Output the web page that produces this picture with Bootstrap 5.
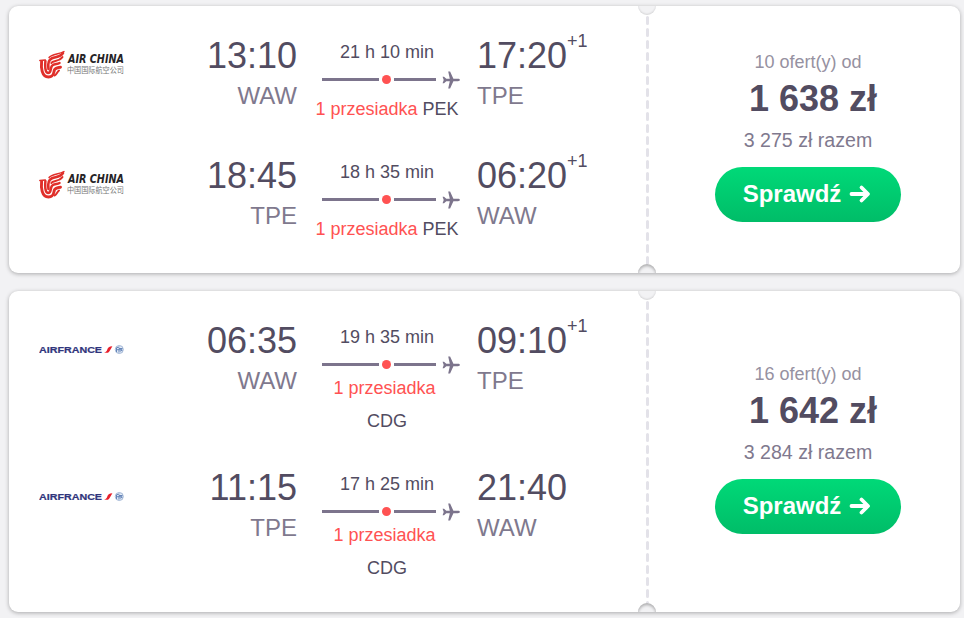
<!DOCTYPE html>
<html lang="pl">
<head>
  <meta charset="UTF-8">
  <meta name="viewport" content="width=device-width, initial-scale=1">
  <title>Wyniki lotów</title>
  <link href="https://cdn.jsdelivr.net/npm/bootstrap@5.3.3/dist/css/bootstrap.min.css" rel="stylesheet">
  <style>
    body {
      background-color: #f2f2f4;
      font-family: "Liberation Sans", Arial, sans-serif;
      color: #524c61;
      overflow: hidden;
    }

    .results {
      padding: 6px 4px 6px 9px;
      display: grid;
      gap: 18px;
    }

    .ticket {
      background-color: #fff;
      border-radius: 9px;
      box-shadow: 0 1px 4px rgba(0, 0, 0, .3);
    }

    .legs {
      width: 629px;
      padding: 14px 0 13px 30px;
    }

    .leg {
      height: 120px;
    }

    .leg-tall {
      height: 147px;
    }

    .airline {
      width: 86px;
      padding-top: 30px;
    }

    .airline svg,
    .plane,
    .arrow {
      display: block;
    }

    .logo-latin {
      font: italic bold 11.5px "DejaVu Sans", sans-serif;
      fill: #262326;
    }

    .logo-han {
      font: 8.5px "Noto Sans CJK SC", sans-serif;
      fill: #777;
    }

    .logo-af {
      font: bold 8.8px "Liberation Sans", sans-serif;
      fill: #30357c;
      stroke: #30357c;
      stroke-width: .2px;
    }

    .point {
      padding-top: 16px;
      width: 172px;
    }

    .point-to {
      width: 150px;
      padding-left: 17px;
    }

    .hour {
      font-size: 36px;
      line-height: 40px;
    }

    .plus-day {
      font-size: 18px;
      line-height: 18px;
      margin-top: -4px;
    }

    .code {
      font-size: 24px;
      line-height: 40px;
      color: #7f798e;
    }

    .path-col {
      width: 146px;
      margin-left: 17px;
      padding-top: 21px;
      font-size: 18px;
      line-height: 22px;
    }

    .track {
      margin: 7px 0 0 8px;
      height: 18px;
    }

    .bar {
      height: 3px;
      background-color: #7c748c;
    }

    .bar-a {
      width: 57px;
    }

    .bar-b {
      width: 42px;
      margin-right: 6px;
    }

    .dot {
      width: 9px;
      height: 9px;
      margin: 0 3px;
      border-radius: 50%;
      background-color: #ff5252;
    }

    .plane {
      margin-top: 1px;
    }

    .stops {
      margin-top: 10px;
    }

    .leg-tall .stops {
      margin-top: -1px;
      line-height: 33px;
    }

    .stop-count {
      color: #ff5252;
    }

    .leg-tall .stop-count {
      margin-right: 5px;
    }

    /* perforation between the flight and the price */
    .tear {
      width: 18px;
      overflow: hidden;
    }

    .notch {
      width: 18px;
      height: 18px;
      flex: none;
      border-radius: 50%;
      background-color: #f2f2f4;
    }

    .notch-top {
      margin-top: -9px;
      box-shadow: inset 0 -1px 2px rgba(0, 0, 0, .12);
    }

    .notch-bottom {
      margin-bottom: -9px;
      box-shadow: inset 0 2px 3px rgba(0, 0, 0, .28);
    }

    .offer {
      padding-bottom: 6px;
    }

    .offer-count {
      font-size: 18px;
      line-height: 22px;
      color: #9691a1;
    }

    .price {
      font-size: 36px;
      line-height: 44px;
      margin-top: 4px;
      padding-left: 10px;
    }

    .total {
      font-size: 19.6px;
      line-height: 28px;
      margin-top: 5px;
      color: #7f798e;
    }

    .btn-check-offer {
      --bs-btn-color: #fff;
      --bs-btn-hover-color: #fff;
      width: 186px;
      height: 55px;
      margin-top: 13px;
      padding: 0 2px 2px 0;
      font-size: 24px;
      border: 0;
      background-image: linear-gradient(#00d978, #00bd68);
    }
  </style>
</head>
<body>

<!-- Shared drawings -->
<svg width="0" height="0" class="position-absolute">
  <symbol id="plane" viewBox="0 0 18 18">
    <path fill="#7c748c" d="M17.900 9c0 .7-.8 1.200-1.900 1.200h-4.600L8.100 17.500H6.200L7.800 10.200H4.300L2 12.300H.6L1.700 9 .6 5.700H2L4.300 7.800H7.800L6.200 .5H8.100L11.400 7.800H16c1.100 0 1.900.5 1.900 1.200z"/>
  </symbol>
  <symbol id="arrow" viewBox="0 0 22 20">
    <path d="M2.500 10H18.500M12.500 3.500L19 10L12.500 16.500" fill="none" stroke="#fff" stroke-width="3.800" stroke-linecap="round" stroke-linejoin="round"/>
  </symbol>
  <symbol id="phoenix" viewBox="0 0 27 30">
    <g fill="none" stroke="#e02f2a" stroke-linecap="round">
      <path stroke-width="2.900" d="M2.600 11.500C2 17 2.500 27 9.500 27c5.500 0 5-4.500 6-7.200.8-2 3.500-2.300 6-2.600"/>
      <path stroke-width="2.500" d="M6.400 11C6 15 5.800 22.700 9 23c3.500 0 2-4.500 4-7.300 2-2.500 5-1.200 7.500-2.700"/>
      <path stroke-width="2.600" d="M9.500 19C8.500 13 9.300 10 13 8.300 17 6.700 21 7.500 24 3"/>
      <path stroke-width="2" d="M12.300 13C14 10 20 12 23.500 7"/>
      <path stroke-width="1.400" d="M10 7.500C13 3.800 20 4.500 25 1.500M.8 10.500l5.500-.5"/>
      <path stroke-width="2" d="M15.500 25.500c2.500-1 2.500-3.500 4.500-5"/>
    </g>
  </symbol>
  <symbol id="af-mark" viewBox="0 0 22 12">
    <path fill="#e8202c" d="M1 9.700c2-.4 2.700-1.500 3.300-3.200.6-1.800 1.700-3.100 5.100-3.200L6.300 8.500c-.6 1-1.300 1.200-2.100 1.200z"/>
    <circle cx="16.300" cy="6.500" r="4" fill="#e3ebf6" stroke="#a3b8d6"/>
    <path fill="none" stroke="#6685b8" d="M13.500 9V4.800l3-.8M16 9.500v-4h3.500M14 6.700h5M17 8.200l2.500-1"/>
  </symbol>
</svg>

<main class="results">

  <div class="ticket d-flex">
    <div class="legs">
      <div class="leg d-flex">
        <div class="airline">
          <svg width="86" height="30">
            <use href="#phoenix" width="27" height="30"/>
            <text class="logo-latin" x="29" y="13" textLength="56" lengthAdjust="spacingAndGlyphs">AIR CHINA</text>
            <text class="logo-han" x="28" y="23" textLength="57" lengthAdjust="spacingAndGlyphs">中国国际航空公司</text>
          </svg>
        </div>
        <div class="point text-end">
          <div class="hour">13:10</div>
          <div class="code">WAW</div>
        </div>
        <div class="path-col text-center">
          <div>21 h 10 min</div>
          <div class="track d-flex align-items-center">
            <span class="bar bar-a"></span><span class="dot"></span><span class="bar bar-b"></span>
            <svg class="plane" width="18" height="18"><use href="#plane"/></svg>
          </div>
          <div class="stops text-nowrap"><span class="stop-count">1 przesiadka</span> PEK</div>
        </div>
        <div class="point point-to">
          <div class="hour d-flex">17:20<span class="plus-day">+1</span></div>
          <div class="code">TPE</div>
        </div>
      </div>
      <div class="leg d-flex">
        <div class="airline">
          <svg width="86" height="30">
            <use href="#phoenix" width="27" height="30"/>
            <text class="logo-latin" x="29" y="13" textLength="56" lengthAdjust="spacingAndGlyphs">AIR CHINA</text>
            <text class="logo-han" x="28" y="23" textLength="57" lengthAdjust="spacingAndGlyphs">中国国际航空公司</text>
          </svg>
        </div>
        <div class="point text-end">
          <div class="hour">18:45</div>
          <div class="code">TPE</div>
        </div>
        <div class="path-col text-center">
          <div>18 h 35 min</div>
          <div class="track d-flex align-items-center">
            <span class="bar bar-a"></span><span class="dot"></span><span class="bar bar-b"></span>
            <svg class="plane" width="18" height="18"><use href="#plane"/></svg>
          </div>
          <div class="stops text-nowrap"><span class="stop-count">1 przesiadka</span> PEK</div>
        </div>
        <div class="point point-to">
          <div class="hour d-flex">06:20<span class="plus-day">+1</span></div>
          <div class="code">WAW</div>
        </div>
      </div>
    </div>
    <div class="tear d-flex flex-column align-items-center">
      <div class="notch notch-top"></div>
      <svg class="flex-grow-1" width="3" height="100"><path d="M1.500 2.500V600" stroke="#e3e2e9" stroke-width="3" stroke-linecap="round" stroke-dasharray="6 6"/></svg>
      <div class="notch notch-bottom"></div>
    </div>
    <div class="offer flex-grow-1 d-flex flex-column align-items-center justify-content-center">
      <div class="offer-count">10 ofert(y) od</div>
      <div class="price fw-bold">1 638 zł</div>
      <div class="total">3 275 zł razem</div>
      <button type="button" class="btn btn-check-offer rounded-pill fw-bold d-flex align-items-center justify-content-center gap-2">
        Sprawdź <svg class="arrow" width="22" height="20"><use href="#arrow"/></svg>
      </button>
    </div>
  </div>

  <div class="ticket d-flex">
    <div class="legs">
      <div class="leg leg-tall d-flex">
        <div class="airline">
          <svg width="86" height="30">
            <text class="logo-af" x="0" y="17.500" textLength="63" lengthAdjust="spacingAndGlyphs">AIRFRANCE</text>
            <use href="#af-mark" x="64" y="8" width="22" height="12"/>
          </svg>
        </div>
        <div class="point text-end">
          <div class="hour">06:35</div>
          <div class="code">WAW</div>
        </div>
        <div class="path-col text-center">
          <div>19 h 35 min</div>
          <div class="track d-flex align-items-center">
            <span class="bar bar-a"></span><span class="dot"></span><span class="bar bar-b"></span>
            <svg class="plane" width="18" height="18"><use href="#plane"/></svg>
          </div>
          <div class="stops"><span class="stop-count">1 przesiadka</span><br>CDG</div>
        </div>
        <div class="point point-to">
          <div class="hour d-flex">09:10<span class="plus-day">+1</span></div>
          <div class="code">TPE</div>
        </div>
      </div>
      <div class="leg leg-tall d-flex">
        <div class="airline">
          <svg width="86" height="30">
            <text class="logo-af" x="0" y="17.500" textLength="63" lengthAdjust="spacingAndGlyphs">AIRFRANCE</text>
            <use href="#af-mark" x="64" y="8" width="22" height="12"/>
          </svg>
        </div>
        <div class="point text-end">
          <div class="hour">11:15</div>
          <div class="code">TPE</div>
        </div>
        <div class="path-col text-center">
          <div>17 h 25 min</div>
          <div class="track d-flex align-items-center">
            <span class="bar bar-a"></span><span class="dot"></span><span class="bar bar-b"></span>
            <svg class="plane" width="18" height="18"><use href="#plane"/></svg>
          </div>
          <div class="stops"><span class="stop-count">1 przesiadka</span><br>CDG</div>
        </div>
        <div class="point point-to">
          <div class="hour d-flex">21:40</div>
          <div class="code">WAW</div>
        </div>
      </div>
    </div>
    <div class="tear d-flex flex-column align-items-center">
      <div class="notch notch-top"></div>
      <svg class="flex-grow-1" width="3" height="100"><path d="M1.500 2.500V600" stroke="#e3e2e9" stroke-width="3" stroke-linecap="round" stroke-dasharray="6 6"/></svg>
      <div class="notch notch-bottom"></div>
    </div>
    <div class="offer flex-grow-1 d-flex flex-column align-items-center justify-content-center">
      <div class="offer-count">16 ofert(y) od</div>
      <div class="price fw-bold">1 642 zł</div>
      <div class="total">3 284 zł razem</div>
      <button type="button" class="btn btn-check-offer rounded-pill fw-bold d-flex align-items-center justify-content-center gap-2">
        Sprawdź <svg class="arrow" width="22" height="20"><use href="#arrow"/></svg>
      </button>
    </div>
  </div>

</main>

<script src="https://cdn.jsdelivr.net/npm/bootstrap@5.3.3/dist/js/bootstrap.bundle.min.js"></script>
</body>
</html>
